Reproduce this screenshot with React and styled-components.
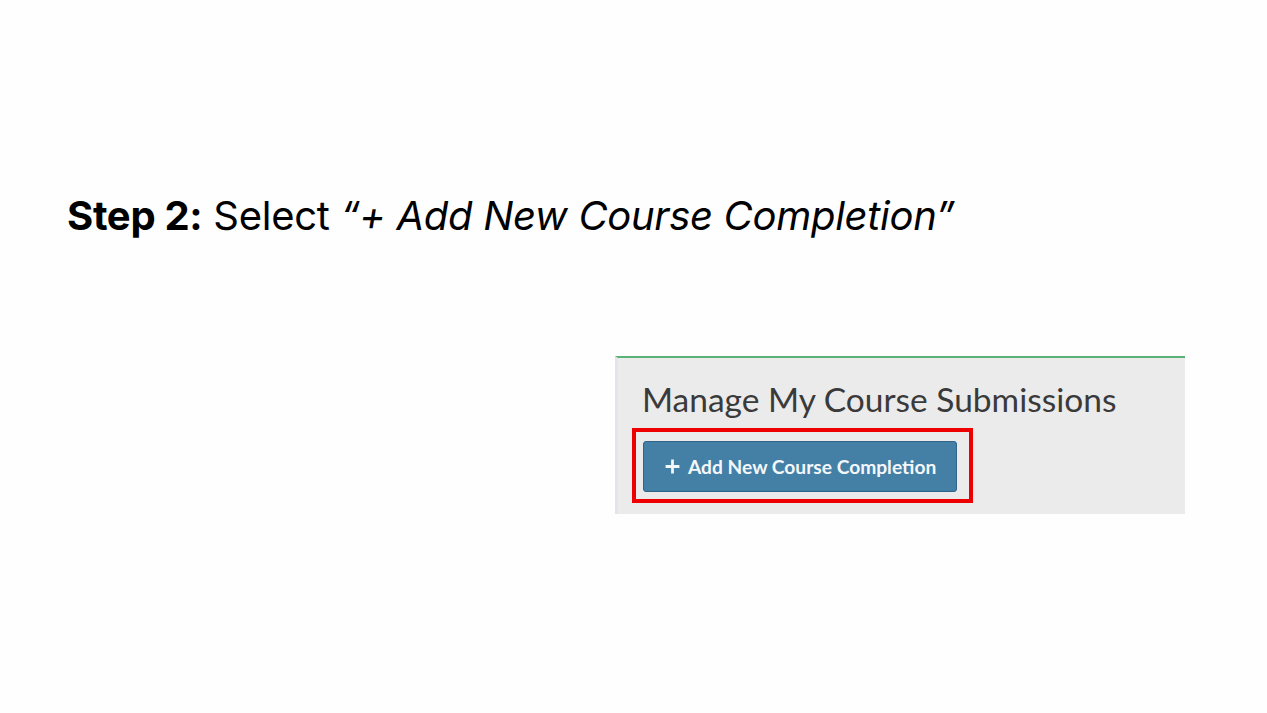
import React from 'react'
import styled, { createGlobalStyle } from 'styled-components'

const GlobalStyle = createGlobalStyle`
	html, body {
		margin: 0;
		padding: 0;
		background: #fefefe;
	}
	#root {
		width: 1267px;
		height: 713px;
	}
`;

const Slide = styled.div`
	display: flex;
	flex-direction: column;
	width: 1267px;
	height: 713px;
	box-sizing: border-box;
	padding: 192px 0 0 67px;
	background: #fefefe;
`;

const Heading = styled.h1`
	margin: 0;
	font-family: Inter, "Liberation Sans", sans-serif;
	font-size: 40px;
	font-weight: 400;
	line-height: 48px;
	color: #000;
	letter-spacing: -0.3px;
`;

const Strong = styled.strong`
	font-weight: 700;
`;

const Quote = styled.em`
	font-style: italic;
`;

const Panel = styled.div`
	display: flex;
	flex-direction: column;
	align-items: flex-start;
	width: 570px;
	height: 158px;
	margin: 116px 0 0 548px;
	box-sizing: border-box;
	padding: 22px 0 0 14px;
	background: #ebebeb;
	border-top: 2px solid #5cb176;
	border-left: 3px solid #e3e5ea;
`;

const PanelTitle = styled.h2`
	margin: 0 0 10px 10px;
	font-family: Lato, "Open Sans", sans-serif;
	font-size: 33.5px;
	font-weight: 400;
	line-height: 38px;
	color: #3a3a3a;
`;

const Highlight = styled.div`
	display: flex;
	padding: 9px 12px 7px 7px;
	border: 4px solid #ee0000;
`;

const AddButton = styled.button`
	display: flex;
	align-items: center;
	gap: 7px;
	height: 51px;
	padding: 0 20px;
	background: #447fa6;
	border: 1px solid #2f6388;
	border-radius: 3px;
	color: #f4f7fa;
	font-family: Lato, "Open Sans", sans-serif;
	font-size: 19.2px;
	font-weight: 700;
	cursor: pointer;
`;

const Plus = styled.svg`
	width: 17px;
	height: 17px;
`;

const App = () => {
	return (
		<>
			<GlobalStyle />
			<Slide>
				<Heading>
					<Strong>Step 2:</Strong> Select <Quote>“+ Add New Course Completion”</Quote>
				</Heading>
				<Panel>
					<PanelTitle>Manage My Course Submissions</PanelTitle>
					<Highlight>
						<AddButton>
							<Plus viewBox="0 0 16 16">
								<path d="M8 1.5v13M1.5 8h13" stroke="currentColor" strokeWidth="2.6" />
							</Plus>
							Add New Course Completion
						</AddButton>
					</Highlight>
				</Panel>
			</Slide>
		</>
	)
}

export default App
